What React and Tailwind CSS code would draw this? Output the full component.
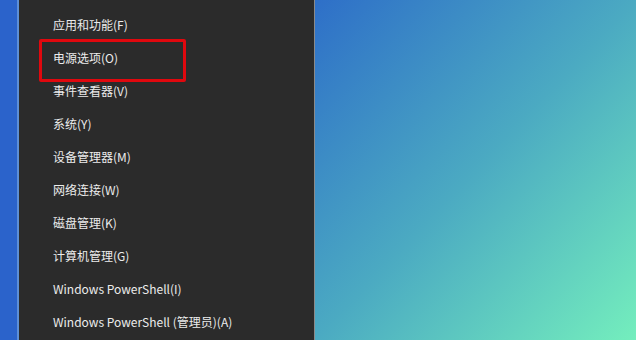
const items = [
  '应用和功能(F)',
  '电源选项(O)',
  '事件查看器(V)',
  '系统(Y)',
  '设备管理器(M)',
  '网络连接(W)',
  '磁盘管理(K)',
  '计算机管理(G)',
  'Windows PowerShell(I)',
  'Windows PowerShell (管理员)(A)',
]

export default function App() {
  return (
    <div
      className="flex h-[340px] w-[636px] overflow-hidden"
      style={{ fontFamily: '"Noto Sans CJK SC", "Microsoft YaHei", sans-serif' }}
    >
      {/* blue strip on the left */}
      <div className="w-[17px] shrink-0 bg-[#2b63cb]" />
      <div className="w-[2px] shrink-0 bg-[#5d8fd8]" />

      {/* context menu */}
      <div className="relative w-[295px] shrink-0 bg-[#2b2b2b] pt-[8px]">
        {items.map((label) => (
          <div
            key={label}
            className="flex h-[33px] items-center pl-[34px] text-[12px] text-[#ececec]"
          >
            {label}
          </div>
        ))}
        {/* highlight box */}
        <div className="absolute left-[20px] top-[39px] h-[43px] w-[147px] rounded-[2px] border-[3px] border-[#e0080e]" />
      </div>
      <div className="w-[1px] shrink-0 bg-[#8a8a8a]" />

      {/* desktop wallpaper */}
      <div className="flex-1 bg-[linear-gradient(to_bottom_right,#2e6fc8_0%,#4baac2_50%,#74eebd_100%)]" />
    </div>
  )
}
